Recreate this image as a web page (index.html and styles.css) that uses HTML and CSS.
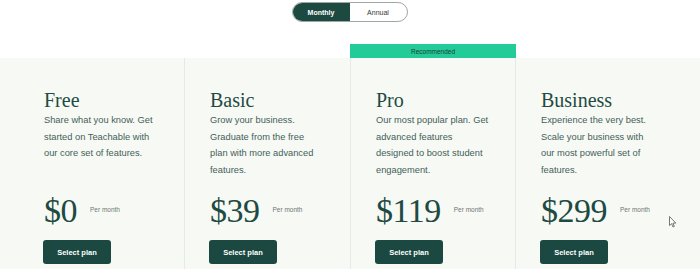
FILE: index.html
```html
<!DOCTYPE html>
<html lang="en">
<head>
<meta charset="utf-8">
<title>Pricing</title>
<link rel="stylesheet" href="styles.css">
</head>
<body>
<div class="page">
  <div class="toggle-wrap">
    <div class="toggle">
      <span class="toggle-opt active">Monthly</span>
      <span class="toggle-opt">Annual</span>
    </div>
  </div>
  <div class="banner-row">
    <div></div><div></div>
    <div class="banner">Recommended</div>
    <div></div>
  </div>
  <div class="band">
    <div class="plans">
      <div class="plan">
        <h2 class="plan-name">Free</h2>
        <p class="plan-desc">Share what you know. Get<br>started on Teachable with<br>our core set of features.</p>
        <div class="price-row"><span class="price">$0</span><span class="per">Per month</span></div>
        <button class="select">Select plan</button>
      </div>
      <div class="plan">
        <h2 class="plan-name">Basic</h2>
        <p class="plan-desc">Grow your business.<br>Graduate from the free<br>plan with more advanced<br>features.</p>
        <div class="price-row"><span class="price">$39</span><span class="per">Per month</span></div>
        <button class="select">Select plan</button>
      </div>
      <div class="plan featured">
        <h2 class="plan-name">Pro</h2>
        <p class="plan-desc">Our most popular plan. Get<br>advanced features<br>designed to boost student<br>engagement.</p>
        <div class="price-row"><span class="price">$119</span><span class="per">Per month</span></div>
        <button class="select">Select plan</button>
      </div>
      <div class="plan">
        <h2 class="plan-name">Business</h2>
        <p class="plan-desc">Experience the very best.<br>Scale your business with<br>our most powerful set of<br>features.</p>
        <div class="price-row"><span class="price">$299</span><span class="per">Per month</span></div>
        <button class="select">Select plan</button>
      </div>
    </div>
  </div>
  <svg class="cursor" width="8" height="12" viewBox="0 0 8 12" aria-hidden="true">
    <path d="M0.5 0.5 L0.5 9.5 L2.6 7.6 L4 11 L5.3 10.4 L3.9 7.1 L6.8 7.1 Z" fill="#fff" stroke="#555" stroke-width="0.8" stroke-linejoin="round"/>
  </svg>
</div>
</body>
</html>
```

FILE: styles.css
```css
* { box-sizing: border-box; }

html, body {
  margin: 0;
  padding: 0;
  background: #ffffff;
}

body {
  font-family: "Liberation Sans", Arial, sans-serif;
  color: #1d4a42;
  overflow: hidden;
}

.page {
  position: relative;
  width: 700px;
  height: 269px;
  overflow: hidden;
}

.toggle-wrap {
  display: flex;
  justify-content: center;
  padding-top: 2px;
}

.toggle {
  display: flex;
  height: 20px;
  border: 1px solid #9ea8a4;
  border-radius: 10px;
  overflow: hidden;
  margin-left: -1px;
}

.toggle-opt {
  display: flex;
  align-items: center;
  justify-content: center;
  width: 57px;
  font-size: 7px;
  color: #2f3b38;
}

.toggle-opt.active {
  width: 57px;
  background: #1c4a41;
  color: #ffffff;
  font-weight: bold;
}

.banner-row {
  display: grid;
  grid-template-columns: repeat(4, 166px);
  justify-content: center;
  margin-top: 22px;
}

.banner {
  height: 14px;
  background: #22cb98;
  color: #1f3c34;
  font-size: 6.5px;
  display: flex;
  align-items: center;
  justify-content: center;
}

.band {
  background: #f7f9f4;
  height: 240px;
}

.plans {
  display: grid;
  grid-template-columns: repeat(4, 166px);
  justify-content: center;
  height: 100%;
}

.plan {
  padding: 31px 0 0 26px;
}

.plan + .plan {
  border-left: 1px solid #e2ebe5;
  padding-left: 25px;
}

.featured {
  border-right: 1px solid #e2ebe5;
}

.featured + .plan {
  border-left: none;
  padding-left: 25px;
}

.plan-name {
  margin: 0;
  font-family: "Liberation Serif", "Times New Roman", serif;
  font-weight: normal;
  font-size: 20px;
  line-height: 23px;
  color: #1e4b43;
}

.plan-desc {
  margin: 0;
  min-height: 67px;
  white-space: nowrap;
  font-size: 9.3px;
  line-height: 16.7px;
  color: #44605a;
}

.price-row {
  display: flex;
  align-items: center;
  margin-top: 12px;
  height: 40px;
}

.price {
  font-family: "Liberation Serif", "Times New Roman", serif;
  font-size: 34px;
  line-height: 40px;
  color: #1d4a42;
  letter-spacing: -0.5px;
}

.per {
  margin-left: 13px;
  padding-bottom: 3px;
  font-size: 6.5px;
  color: #6f7774;
}

.select {
  display: block;
  margin-top: 9px;
  margin-left: -1px;
  width: 68px;
  height: 24px;
  border: none;
  border-radius: 3px;
  background: #1b4941;
  color: #ffffff;
  font-family: "Liberation Sans", Arial, sans-serif;
  font-weight: bold;
  font-size: 7.5px;
  padding: 0;
}

.cursor {
  position: absolute;
  left: 669px;
  top: 216px;
}
```
